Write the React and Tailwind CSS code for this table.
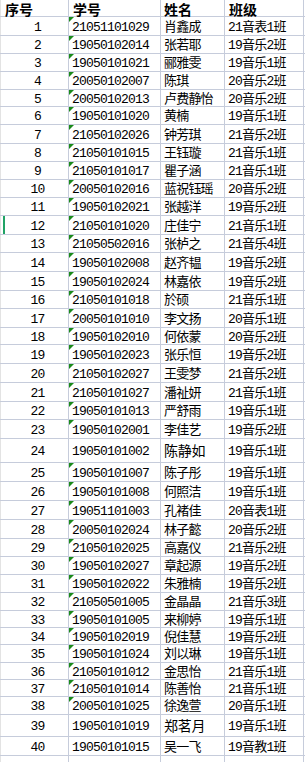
import React from 'react';

const rows = [
  [1, '21051101029', '肖鑫成', '21音表1班', 19],
  [2, '19050102014', '张若耶', '19音乐2班', 18],
  [3, '19050101021', '郦雅雯', '19音乐1班', 18],
  [4, '20050102007', '陈琪', '20音乐2班', 18],
  [5, '20050102013', '卢费静怡', '20音乐2班', 17],
  [6, '19050101020', '黄楠', '19音乐1班', 18],
  [7, '21050102026', '钟芳琪', '21音乐2班', 19],
  [8, '21050101015', '王钰璇', '21音乐1班', 18],
  [9, '21050101017', '瞿子涵', '21音乐1班', 18],
  [10, '20050102016', '蓝祝钰瑶', '20音乐2班', 18],
  [11, '19050102021', '张越洋', '19音乐2班', 18],
  [12, '21050101020', '庄佳宁', '21音乐1班', 19],
  [13, '21050502016', '张栌之', '21音乐4班', 18],
  [14, '19050102008', '赵齐韫', '19音乐2班', 19],
  [15, '19050102024', '林嘉依', '19音乐2班', 19],
  [16, '21050101018', '於硕', '21音乐1班', 18],
  [17, '20050101010', '李文扬', '20音乐1班', 19],
  [18, '19050102010', '何依蒙', '20音乐2班', 17],
  [19, '19050102023', '张乐恒', '19音乐2班', 19],
  [20, '21050102027', '王雯梦', '21音乐2班', 19],
  [21, '21050101027', '潘祉妍', '21音乐1班', 19],
  [22, '19050101013', '严舒雨', '19音乐1班', 18],
  [23, '19050102001', '李佳艺', '19音乐2班', 19],
  [24, '19050101002', '陈静如', '19音乐1班', 24],
  [25, '19050101007', '陈子彤', '19音乐1班', 19],
  [26, '19050101008', '何照洁', '19音乐1班', 19],
  [27, '19051101003', '孔褚佳', '20音表1班', 19],
  [28, '20050102024', '林子懿', '20音乐2班', 19],
  [29, '21050102025', '高嘉仪', '21音乐2班', 18],
  [30, '19050102027', '章起源', '19音乐2班', 18],
  [31, '19050102022', '朱雅楠', '19音乐2班', 18],
  [32, '21050501005', '金晶晶', '21音乐3班', 18],
  [33, '19050101005', '来柳婷', '19音乐1班', 17],
  [34, '19050102019', '倪佳慧', '19音乐2班', 17],
  [35, '19050101024', '刘以琳', '19音乐1班', 18],
  [36, '21050101012', '金思怡', '21音乐1班', 17],
  [37, '21050101014', '陈善怡', '21音乐1班', 17],
  [38, '20050101025', '徐逸萱', '20音乐1班', 18],
  [39, '19050101019', '郑茗月', '19音乐1班', 22],
  [40, '19050101015', '吴一飞', '19音教1班', 19],
];

// rows whose id was typed as a number, so no green text marker
const plainIds = [24, 39, 40];
const bigNames = [24, 39];

const cellFont = "font-['Liberation_Mono','Noto_Sans_CJK_SC',monospace] text-[13px] tracking-[-0.8px] text-black leading-none";

function Row({ row }) {
  const [no, id, name, cls, h] = row;
  return (
    <div className="flex border-b border-[#c6ccdb]" style={{ height: h }}>
      <div className="relative w-[69px] border-l border-l-[#e3e3e3] border-r border-r-[#c6ccdb] flex items-center justify-center pl-[6px] pt-[2px]">
        {no === 12 && <div className="absolute left-[2px] top-0 bottom-0 w-[2px] bg-[#21a366]"></div>}
        <span className={cellFont}>{no}</span>
      </div>
      <div className="relative w-[92px] border-r border-[#c6ccdb] flex items-center pl-[3px] pt-[2px]">
        {!plainIds.includes(no) && (
          <div className="absolute left-0 top-0 w-0 h-0 border-t-[5px] border-t-[#1a8a1a] border-r-[5px] border-r-transparent"></div>
        )}
        <span className={cellFont}>{id}</span>
      </div>
      <div className="w-[64px] border-r border-[#c6ccdb] flex items-center pl-[3px] pt-[2px]">
        <span className={cellFont + (bigNames.includes(no) ? ' !text-[14px] !tracking-[-0.3px]' : '')}>{name}</span>
      </div>
      <div className="w-[79px] border-r border-[#c6ccdb] flex items-center pl-[3px] pt-[2px]">
        <span className={cellFont}>{cls}</span>
      </div>
    </div>
  );
}

export default function App() {
  return (
    <div className="w-[305px] h-[762px] overflow-hidden bg-white">
      {/* Header */}
      <div className="flex h-[17px] border-b border-[#c6ccdb] font-['Noto_Sans_CJK_SC',sans-serif] font-bold text-[14px] leading-[14px] text-black">
        <div className="w-[69px] border-l border-l-[#e3e3e3] border-r border-r-[#c6ccdb] pl-[4px] pt-[2px]">序号</div>
        <div className="w-[92px] border-r border-[#c6ccdb] pl-[4px] pt-[2px]">学号</div>
        <div className="w-[64px] border-r border-[#c6ccdb] pl-[3px] pt-[2px]">姓名</div>
        <div className="w-[79px] border-r border-[#c6ccdb] pl-[4px] pt-[2px]">班级</div>
      </div>

      {rows.map(row => (
        <Row key={row[0]} row={row} />
      ))}

      {/* empty row under the list */}
      <div className="flex h-[20px] border-b border-[#c6ccdb]">
        <div className="w-[69px] border-l border-l-[#e3e3e3] border-r border-r-[#c6ccdb]"></div>
        <div className="w-[92px] border-r border-[#c6ccdb]"></div>
        <div className="w-[64px] border-r border-[#c6ccdb]"></div>
        <div className="w-[79px] border-r border-[#c6ccdb]"></div>
      </div>
    </div>
  );
}
